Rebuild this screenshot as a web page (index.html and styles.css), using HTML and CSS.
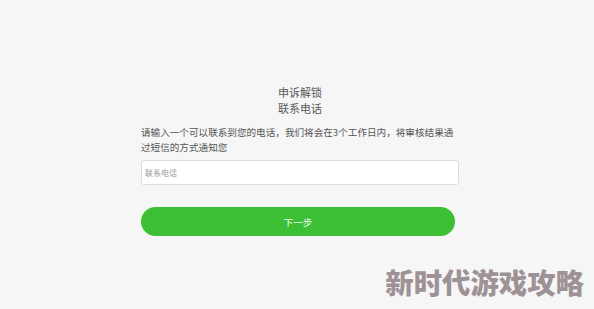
FILE: index.html
```html
<!DOCTYPE html>
<html lang="zh-CN">
<head>
  <meta charset="UTF-8">
  <meta name="viewport" content="width=device-width, initial-scale=1.0">
  <title>申诉解锁</title>
  <link rel="stylesheet" href="styles.css">
</head>
<body>
  <div class="appeal">
    <div class="title">
      <p>申诉解锁</p>
      <p>联系电话</p>
    </div>
    <p class="tip">请输入一个可以联系到您的电话，我们将会在3个工作日内，将审核结果通过短信的方式通知您</p>
    <input class="phone" type="text" placeholder="联系电话">
    <button class="next">下一步</button>
  </div>

  <div class="watermark">新时代游戏攻略</div>
</body>
</html>
```

FILE: styles.css
```css
* {
  margin: 0;
  padding: 0;
  box-sizing: border-box;
  font-family: 'Noto Sans CJK SC', 'Liberation Sans', sans-serif;
}

body {
  background: #f6f6f6;
  height: 309px;
  overflow: hidden;
  position: relative;
}

.appeal {
  width: 318px;
  margin-left: 141px;
  padding-top: 84px;
  display: flex;
  flex-direction: column;
}

.title {
  text-align: center;
  font-size: 11px;
  line-height: 16px;
  color: #5a5a5a;
}

.tip {
  margin-top: 9px;
  font-size: 9.6px;
  line-height: 15px;
  color: #555;
}

.phone {
  margin-top: 5px;
  height: 25px;
  width: 318px;
  border: 1px solid #dcdcdc;
  border-radius: 3px;
  background: #fff;
  padding: 0 3px;
  font-size: 8px;
  outline: none;
}

.phone::placeholder {
  color: #999;
}

.next {
  margin-top: 22px;
  width: 314px;
  height: 29px;
  border: none;
  border-radius: 14.5px;
  background: #3dbf35;
  color: #f0fff0;
  font-size: 9.6px;
  cursor: pointer;
}

.watermark {
  position: absolute;
  right: 10px;
  top: 262px;
  font-size: 28.4px;
  font-weight: 900;
  color: #9e9296;
  line-height: 40px;
}
```
